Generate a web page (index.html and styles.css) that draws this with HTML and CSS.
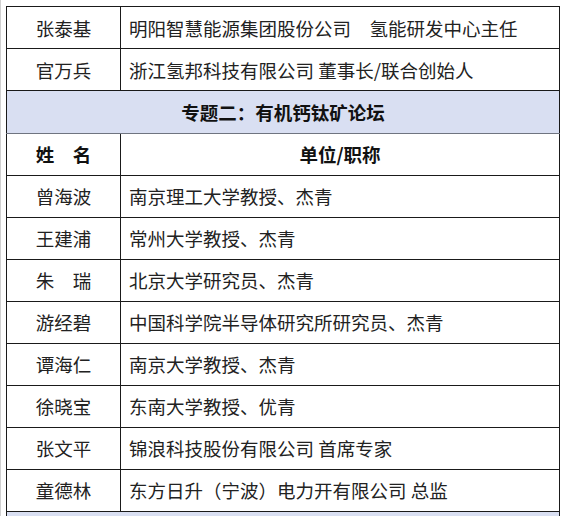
FILE: index.html
```html
<!DOCTYPE html>
<html lang="zh-CN">
<head>
<meta charset="utf-8">
<title>专题二：有机钙钛矿论坛</title>
<link rel="stylesheet" href="styles.css">
</head>
<body>
<div class="page">
  <table class="roster">
    <colgroup><col class="c-name"><col class="c-org"></colgroup>
    <tbody>
      <tr><td class="name">张泰基</td><td class="org">明阳智慧能源集团股份公司　氢能研发中心主任</td></tr>
      <tr><td class="name">官万兵</td><td class="org">浙江氢邦科技有限公司 董事长/联合创始人</td></tr>
      <tr class="band"><td colspan="2">专题二：有机钙钛矿论坛</td></tr>
      <tr class="head"><td class="name">姓　名</td><td class="org-head">单位/职称</td></tr>
      <tr><td class="name">曾海波</td><td class="org">南京理工大学教授、杰青</td></tr>
      <tr><td class="name">王建浦</td><td class="org">常州大学教授、杰青</td></tr>
      <tr><td class="name">朱　瑞</td><td class="org">北京大学研究员、杰青</td></tr>
      <tr><td class="name">游经碧</td><td class="org">中国科学院半导体研究所研究员、杰青</td></tr>
      <tr><td class="name">谭海仁</td><td class="org">南京大学教授、杰青</td></tr>
      <tr><td class="name">徐晓宝</td><td class="org">东南大学教授、优青</td></tr>
      <tr><td class="name">张文平</td><td class="org">锦浪科技股份有限公司 首席专家</td></tr>
      <tr><td class="name">童德林</td><td class="org">东方日升（宁波）电力开有限公司 总监</td></tr>
      <tr class="band"><td colspan="2">&nbsp;</td></tr>
    </tbody>
  </table>
</div>
</body>
</html>
```

FILE: styles.css
```css
html, body {
  margin: 0;
  padding: 0;
  background: #ffffff;
}

body {
  font-family: "Noto Sans CJK SC", "Noto Sans", sans-serif;
  color: #222222;
  font-size: 18.5px;
  overflow: hidden;
}

.page {
  padding: 6px 0 0 5px;
  border-left: 1px solid #d0d0d0;
  min-height: 520px;
  box-sizing: border-box;
}

.roster {
  border-collapse: collapse;
  table-layout: fixed;
  width: 554px;
}

.c-name { width: 114px; }

.roster td {
  border: 1px solid #1a1a1a;
  height: 41px;
  padding: 0;
  line-height: 24px;
  vertical-align: middle;
  white-space: nowrap;
}

.roster td.name {
  text-align: center;
}

.roster td.org {
  text-align: left;
  padding-left: 8px;
}

.roster .head td {
  font-weight: bold;
  color: #111111;
}

.roster td.org-head {
  text-align: center;
}

.roster .band td {
  background: #d9dff2;
  border-top: 1px solid #6f7480;
  border-bottom: 1px solid #6f7480;
  text-align: center;
  font-weight: bold;
  color: #111111;
  height: 41.5px;
}
```
